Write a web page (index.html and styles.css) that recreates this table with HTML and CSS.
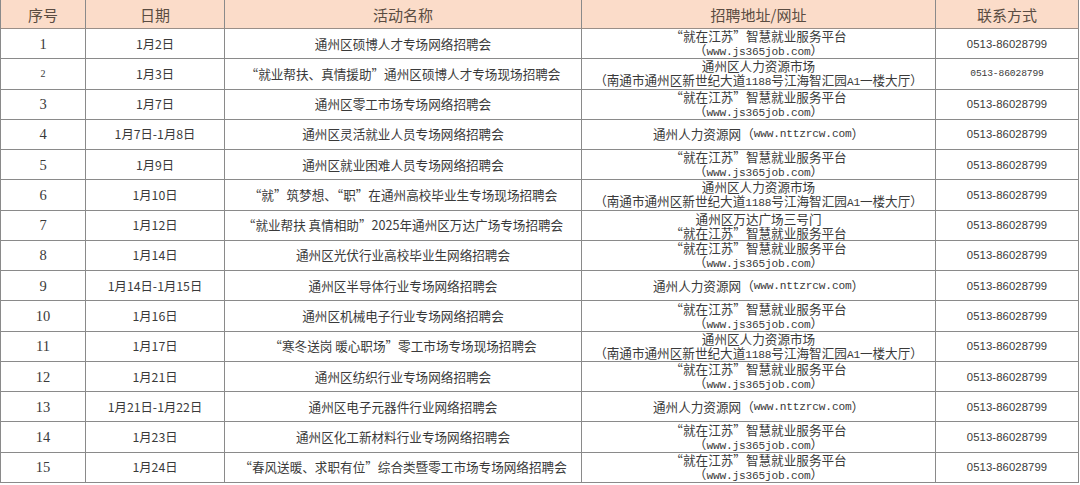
FILE: index.html
```html
<!DOCTYPE html>
<html lang="zh-CN">
<head>
<meta charset="utf-8">
<title>招聘会安排</title>
<link rel="stylesheet" href="styles.css">
</head>
<body>
<div class="sheet">
  <div class="hd">序号</div><div class="hd">日期</div><div class="hd">活动名称</div><div class="hd">招聘地址/网址</div><div class="hd">联系方式</div>

  <div class="c no">1</div><div class="c date">1月2日</div><div class="c">通州区硕博人才专场网络招聘会</div><div class="c two"><span>“就在江苏”智慧就业服务平台</span><span>（<i class="m">www.js365job.com</i>）</span></div><div class="c tel">0513-86028799</div>

  <div class="c no small">2</div><div class="c date">1月3日</div><div class="c">“就业帮扶、真情援助”通州区硕博人才专场现场招聘会</div><div class="c two"><span>通州区人力资源市场</span><span>（南通市通州区新世纪大道<i class="m">1188</i>号江海智汇园<i class="m">A1</i>一楼大厅）</span></div><div class="c tel mono">0513-86028799</div>

  <div class="c no">3</div><div class="c date">1月7日</div><div class="c">通州区零工市场专场网络招聘会</div><div class="c two"><span>“就在江苏”智慧就业服务平台</span><span>（<i class="m">www.js365job.com</i>）</span></div><div class="c tel">0513-86028799</div>

  <div class="c no">4</div><div class="c date">1月7日-1月8日</div><div class="c">通州区灵活就业人员专场网络招聘会</div><div class="c">通州人力资源网（<i class="m">www.nttzrcw.com</i>）</div><div class="c tel">0513-86028799</div>

  <div class="c no">5</div><div class="c date">1月9日</div><div class="c">通州区就业困难人员专场网络招聘会</div><div class="c two"><span>“就在江苏”智慧就业服务平台</span><span>（<i class="m">www.js365job.com</i>）</span></div><div class="c tel">0513-86028799</div>

  <div class="c no">6</div><div class="c date">1月10日</div><div class="c">“就”筑梦想、“职”在通州高校毕业生专场现场招聘会</div><div class="c two"><span>通州区人力资源市场</span><span>（南通市通州区新世纪大道<i class="m">1188</i>号江海智汇园<i class="m">A1</i>一楼大厅）</span></div><div class="c tel">0513-86028799</div>

  <div class="c no">7</div><div class="c date">1月12日</div><div class="c">“就业帮扶 真情相助”2025年通州区万达广场专场招聘会</div><div class="c two"><span>通州区万达广场三号门</span><span>“就在江苏”智慧就业服务平台</span></div><div class="c tel">0513-86028799</div>

  <div class="c no">8</div><div class="c date">1月14日</div><div class="c">通州区光伏行业高校毕业生网络招聘会</div><div class="c two"><span>“就在江苏”智慧就业服务平台</span><span>（<i class="m">www.js365job.com</i>）</span></div><div class="c tel">0513-86028799</div>

  <div class="c no">9</div><div class="c date">1月14日-1月15日</div><div class="c">通州区半导体行业专场网络招聘会</div><div class="c">通州人力资源网（<i class="m">www.nttzrcw.com</i>）</div><div class="c tel">0513-86028799</div>

  <div class="c no">10</div><div class="c date">1月16日</div><div class="c">通州区机械电子行业专场网络招聘会</div><div class="c two"><span>“就在江苏”智慧就业服务平台</span><span>（<i class="m">www.js365job.com</i>）</span></div><div class="c tel">0513-86028799</div>

  <div class="c no">11</div><div class="c date">1月17日</div><div class="c">“寒冬送岗 暖心职场”零工市场专场现场招聘会</div><div class="c two"><span>通州区人力资源市场</span><span>（南通市通州区新世纪大道<i class="m">1188</i>号江海智汇园<i class="m">A1</i>一楼大厅）</span></div><div class="c tel">0513-86028799</div>

  <div class="c no">12</div><div class="c date">1月21日</div><div class="c">通州区纺织行业专场网络招聘会</div><div class="c two"><span>“就在江苏”智慧就业服务平台</span><span>（<i class="m">www.js365job.com</i>）</span></div><div class="c tel">0513-86028799</div>

  <div class="c no">13</div><div class="c date">1月21日-1月22日</div><div class="c">通州区电子元器件行业网络招聘会</div><div class="c">通州人力资源网（<i class="m">www.nttzrcw.com</i>）</div><div class="c tel">0513-86028799</div>

  <div class="c no">14</div><div class="c date">1月23日</div><div class="c">通州区化工新材料行业专场网络招聘会</div><div class="c two"><span>“就在江苏”智慧就业服务平台</span><span>（<i class="m">www.js365job.com</i>）</span></div><div class="c tel">0513-86028799</div>

  <div class="c no">15</div><div class="c date">1月24日</div><div class="c">“春风送暖、求职有位”综合类暨零工市场专场网络招聘会</div><div class="c two"><span>“就在江苏”智慧就业服务平台</span><span>（<i class="m">www.js365job.com</i>）</span></div><div class="c tel">0513-86028799</div>
</div>
</body>
</html>
```

FILE: styles.css
```css
html, body {
  margin: 0;
  padding: 0;
  background: #ffffff;
}

.sheet {
  width: 1078px;
  display: grid;
  grid-template-columns: 85px 139px 357px 354px 143px;
  grid-template-rows: 29px repeat(15, 30.27px);
  border-left: 1px solid #8a8a8a;
  box-sizing: border-box;
  font-family: "Noto Sans CJK SC", "Noto Sans", sans-serif;
  color: #3a3a3a;
}

.hd,
.c {
  border-right: 1px solid #8a8a8a;
  border-bottom: 1px solid #8a8a8a;
  display: flex;
  align-items: center;
  justify-content: center;
  text-align: center;
  white-space: nowrap;
  overflow: visible;
  min-width: 0;
}

.hd {
  background: #fbdcc9;
  font-size: 15px;
  color: #5a4c42;
  border-bottom-color: #9a8f88;
}

.c {
  font-size: 12.6px;
  line-height: 14px;
}

.two {
  flex-direction: column;
  line-height: 14px;
  padding-top: 1px;
  box-sizing: border-box;
}

.two span {
  display: block;
}

.m {
  font-style: normal;
  font-family: "Liberation Mono", "DejaVu Sans Mono", monospace;
  font-size: 11.2px;
  letter-spacing: -0.2px;
}

.no {
  font-family: "Liberation Serif", "Noto Sans CJK SC", serif;
  font-size: 14.5px;
}

.no.small {
  font-size: 10px;
}

.date {
  font-size: 12.3px;
}

.tel {
  font-family: "Liberation Sans", "Noto Sans", sans-serif;
  font-size: 11.3px;
  letter-spacing: 0.1px;
}

.tel.mono {
  font-family: "Liberation Mono", monospace;
  font-size: 9.6px;
  letter-spacing: -0.1px;
}
```
